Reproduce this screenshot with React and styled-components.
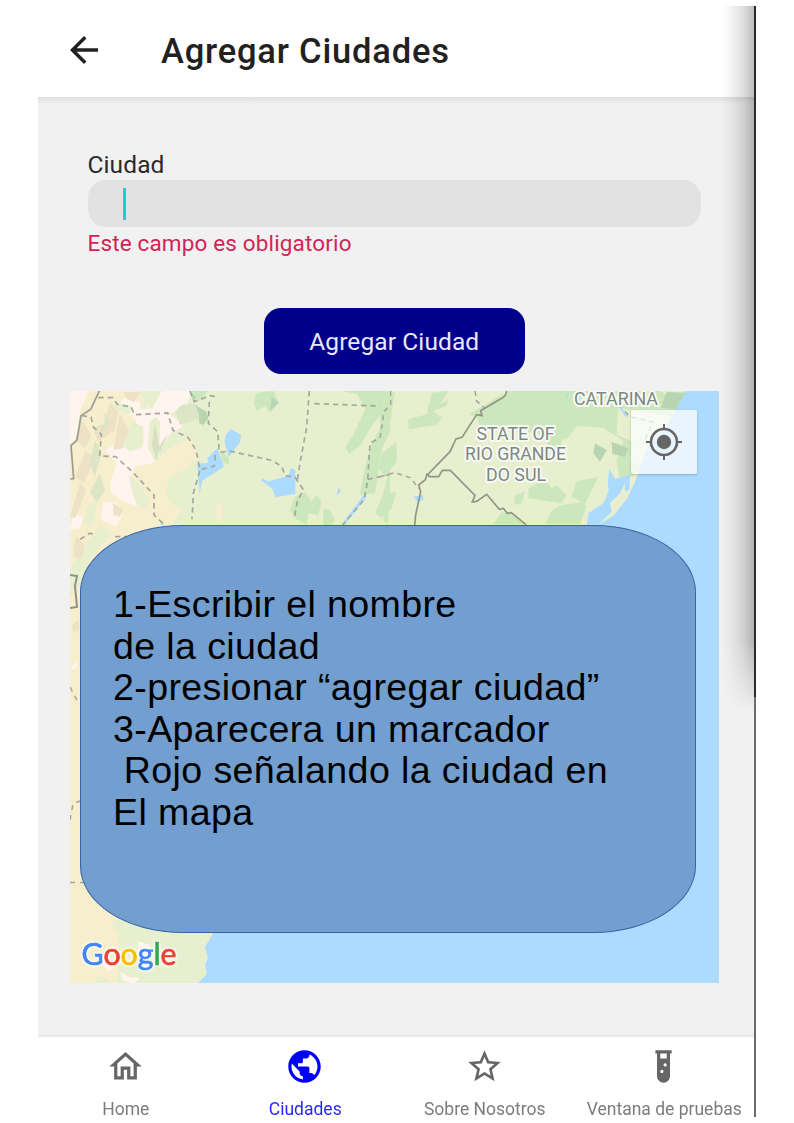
import React from "react";
import styled, { createGlobalStyle } from "styled-components";
import { MdArrowBack, MdOutlineHome, MdPublic, MdStarBorder } from "react-icons/md";

const GlobalStyle = createGlobalStyle`
  * { box-sizing: border-box; }
  body { margin: 0; background: #fff; font-family: Roboto, "Liberation Sans", sans-serif; }
`;

const Page = styled.div`
  width: 794px;
  height: 1123px;
  padding: 6px 0 6px 37.5px;
  overflow: hidden;
`;

const Phone = styled.div`
  position: relative;
  display: flex;
  flex-direction: column;
  width: 717px;
  height: 1111px;
  background: #fff;
`;

const Header = styled.header`
  display: flex;
  align-items: center;
  height: 91px;
  flex: none;
  padding: 0 0 4px 25.5px;
  background: #fff;
  color: #212121;
`;

const BackIcon = styled(MdArrowBack)`
  width: 42px;
  height: 42px;
`;

const Title = styled.h1`
  margin: 2px 0 0 56px;
  font-size: 34.5px;
  font-weight: 500;
  line-height: 40px;
  letter-spacing: 0.8px;
  white-space: nowrap;
`;

const Content = styled.main`
  display: flex;
  flex-direction: column;
  flex: 1;
  padding: 54px 36px 0 32.5px;
  background:
    linear-gradient(to bottom, #dedede, #e4e4e4 2px, #f1f1f1 7px) top / 100% 7px no-repeat,
    linear-gradient(to top, #e6e6e6, #f1f1f1) bottom / 100% 4px no-repeat,
    #f1f1f1;
`;

const Field = styled.div`
  display: flex;
  flex-direction: column;
  margin: 0 17.5px;
`;

const Label = styled.label`
  height: 29px;
  font-size: 24.5px;
  line-height: 28px;
  letter-spacing: 0.1px;
  color: #2a2a2a;
`;

const Input = styled.div`
  display: flex;
  align-items: center;
  height: 47px;
  padding-left: 35px;
  border-radius: 18px;
  background: #e2e2e2;
`;

const Caret = styled.span`
  width: 3px;
  height: 32px;
  background: #00dcc8;
`;

const FieldError = styled.p`
  margin: 1px 0 0;
  font-size: 22.5px;
  line-height: 30px;
  letter-spacing: 0.15px;
  color: #d32456;
`;

const AddButton = styled.button`
  align-self: center;
  width: 261px;
  height: 66px;
  margin: 50px 0 17px;
  padding: 0;
  border: 0;
  border-radius: 17px;
  background: #00008b;
  color: #e8e8fa;
  font: 24.5px Roboto, sans-serif;
  letter-spacing: 0.1px;
`;

const MapArea = styled.div`
  position: relative;
  height: 592px;
  width: 648.5px;
`;

const MapDrawing = styled.svg`
  display: block;
  width: 100%;
  height: 100%;
`;

const LocateButton = styled.div`
  position: absolute;
  top: 19px;
  right: 21.5px;
  display: grid;
  place-items: center;
  width: 66px;
  height: 64px;
  border-radius: 2px;
  background: rgba(255, 255, 255, 0.72);
  box-shadow: 0 1px 3px rgba(0, 0, 0, 0.2);
`;

const Instructions = styled.section`
  position: absolute;
  top: 134px;
  left: 9.5px;
  width: 616.5px;
  height: 408px;
  padding: 58px 0 0 32.5px;
  border: 1.3px solid #3465a4;
  border-radius: 103px / 67px;
  background: #729fcf;
`;

const Step = styled.p`
  margin: 0;
  color: #000;
  font: 37.6px/41.6px "Liberation Sans", Arial, sans-serif;
  letter-spacing: 0.37px;
  white-space: pre;
`;

const TabBar = styled.nav`
  display: flex;
  height: 80px;
  flex: none;
  background: #fff;
`;

const Tab = styled.div`
  display: flex;
  flex: 0 0 179.5px;
  flex-direction: column;
  align-items: center;
  padding: 10px 4px 0 0;
  color: ${(p) => (p.$active ? "#0000ff" : "#666")};

  svg { flex: none; width: 39px; height: 39px; }
`;

const TabLabel = styled.span`
  flex: none;
  margin: 12px 0 0 1px;
  font-size: 17.5px;
  line-height: 22px;
  opacity: 0.85;
  white-space: nowrap;
`;

const EdgeShadow = styled.div`
  position: absolute;
  top: 0;
  right: 0;
  width: 33px;
  height: 706px;
  background: linear-gradient(to right, transparent, rgba(0, 0, 0, 0.04) 25%, rgba(0, 0, 0, 0.12) 62%, rgba(0, 0, 0, 0.27));
  mask-image: linear-gradient(to bottom, #000 90%, transparent);
`;

const Edge = styled.div`
  position: absolute;
  top: ${(p) => p.$top}px;
  right: -1.5px;
  width: 2px;
  height: ${(p) => p.$height}px;
  background: ${(p) => p.$color};
`;

const TestTube = () => (
  <svg viewBox="0 0 24 24" fill="currentColor">
    <path d="M7 2v2h1v14a4 4 0 0 0 8 0V4h1V2H7m4 14a1 1 0 1 1 0-2 1 1 0 0 1 0 2m2-4a1 1 0 1 1 0-2 1 1 0 0 1 0 2m1-5h-4V4h4v3Z" />
  </svg>
);

const LocateIcon = () => (
  <svg width="38" height="38" viewBox="0 0 38 38" fill="none" stroke="#666" strokeWidth="2">
    <circle cx="19" cy="19" r="13" strokeWidth="2.6" />
    <circle cx="19" cy="19" r="7.2" fill="#666" stroke="none" />
    <path d="M19 1v6M19 31v6M1 19h6M31 19h6" />
  </svg>
);

const halo = { paintOrder: "stroke", stroke: "#f8faf2", strokeWidth: 4, strokeLinejoin: "round" };

const Wordmark = styled.text`
  font: 400 31px Lato, sans-serif;
  stroke-width: 0.7px;
  filter: drop-shadow(0 0 1.5px #fff) drop-shadow(0 0 1.5px #fff);
`;

const Terrain = () => (
  <MapDrawing viewBox="70 391 648.5 592" preserveAspectRatio="none">
    <rect x="70" y="391" width="649" height="592" fill="#e7efcf" />
    <path fill="#f7eecd" d="M70 391h78l-8 18 10 16-14 22 28 4 26-13 7 10-8 18-22 14-5 20 20 8-10 18-35 8-20 449H70Z" />
    <g transform="translate(60 380) scale(.33333)">
      <path fill="#fff4ee" d="M30 33h55L60 95 50 175 30 190ZM240 90l50-10 35 20 45 35-60 50-20 60-50 20-15 95-35 5-40-55 20-60-35-40 35-20 50-10 10-60-60-40 20-25 50 10ZM260 80l45-47h88l-10 40-45 25ZM130 365l40 5 18 35-20 35-45-20ZM40 400l30 10-10 35-30 5ZM165 275l50 20 35 50-20 35-45-20-35-25Z" />
      <path fill="#ede2c6" d="M150 65l25 25-10 60-50 35-18-40 35-15ZM180 100l30 60-20 45-30 5ZM65 120l30 45-20 40-30-25ZM75 215l35 15-40 80-25-20ZM60 310l20 20-35 85-15-5ZM190 36h55l-25 30-20-10ZM160 370l30 20-10 20-20-5Z" />
      <path fill="#dce5c6" d="M130 95l20 30-35 45 20-50ZM365 75l40-5 30 40-75 25-15-40ZM105 180l20 40-20 70-15-40ZM120 280l15 50-25 40-20-35Z" />
      <path fill="#f7eecd" d="M380 178l25 15 8 45-85 30-10 80 35 40-50 35-50 10-10-60-30-85 15-30 90-15 12-40Z" />
      <path fill="#e7efcf" d="M245 33h60l-30 55-32-40ZM215 125l35 15v60l-40 15-20-20ZM205 285l25 20 40 55-10 30-30-15-15-45ZM85 375l30-15-20 80-25-10ZM160 65l60 15-15 25-45-20ZM270 125l18-14 12 15-2 75 42-50-5 45-50 50-22-45Z" />
      <path fill="#d9dfc2" d="M285 130l12 70-7 45-14-50ZM325 155l-25 60-8-5Z" />
      <path fill="#f7eecd" d="M470 375h18l-5 48-15-8Z" />
      <path fill="#cde7bd" d="M590 38l50-5 17 35-27 30-15-20-25 15-8-25ZM845 33h145v35l-55 70-35 60-32 24-12-20 25-40 35-75-25-45ZM930 200l25-45 35-60v60l-25 55-20 130-45 5 10-60ZM705 350l30-15 20 30 15-20 15 20-10 40-30-5-5 35-35-20-15-25ZM790 385l20 5 15 30-10 15h-25ZM395 33h50l-30 30-20-10ZM480 210l27 25v20l-20-10ZM990 260v90l-30 60-15-10 25-60ZM970 390l15-10v50l-15-5Z" />
      <path fill="#b8d5b3" d="M405 75l35 20 5 20-15 20-12-5-2-32ZM635 50l22 18-27 24ZM390 36l20 15-12 10Z" />
      <path fill="#addaff" d="M513 147l30 18-2 20-35 47-12-45 3-22ZM472 205l20 55-65 42-8 38-7-89 32-2-2-15ZM605 294l20 10 50-14 12-8 5-18 14 6v72l-60 10-8-24-33-26ZM835 322l8 12-13 13ZM916 338l3 14-65 82-8-2ZM302 427l15 8h-15Z" />
      <path fill="none" stroke="#999b91" strokeWidth="5" d="M118 33 92 88 63 107 51 180 33 197 41 296 31 297" />
      <path fill="none" stroke="#a3a79c" strokeWidth="5" strokeDasharray="16 12" d="M115 53h43l14 20 42 8 9 23 100-5 16 52 45 21 24 38 12 60-20 70-4 78M65 107l28 4 7 30 24 22-5 65 48 2 50 45 65 70v60l27 25M390 33l13 32 47-18 14 2M448 65l-3 65 28 25 5 62 35-3 122 27 30 18 10 28 30 5 25 37-18 35-9 48M748 33l-8 110-18 95-10 62M763 71l220 8M985 80l-13 30-7 60-35 20-7 110-10 58-65 77M923 298l65-14M425 268l38-10 3-35M60 478l28-18 32 4v16M165 470h35" />
    </g>
    <g transform="translate(380 380) scale(.33333)">
      <path fill="#cde7bd" d="M385 33h455l20 10 70-10-30 100-50-10-40 140-90 40-10-60 20-60-60-40-80-5-60 80-60-60-170-15-8-30-25-10ZM0 70l45-37-20 130-25 25ZM5 220l45-35v60L15 290-5 265ZM155 38l50-5-25 40 25-15-5 20-40 15 25 20-15 22-85 13v-30l55-15ZM470 310l30-5 15 20 15-10 30 30-15 25-100-15v-30ZM590 303l65-12-20 40-20 40-40-20ZM545 375l60-8 15 10-20 55H495l20-40ZM405 345l30-10-10 35-23 5ZM0 390l30-50 20-5-15 50-35 30ZM365 395l40 10 30 28h-95Z" />
      <path fill="#b8d5b3" d="M860 35l65 5-12 50-70-7ZM645 190l35 20-20 35-20-25ZM695 185l50 20-10 25-38-8Z" />
      <path fill="#e7efcf" d="M545 180l25-8 30 28-20 18-38-8ZM715 85l195 30-30 45-70 60-20 45-40-25 10-55-50-20ZM735 310l30-30 20-10-20 60-40 50-20 10Z" />
      <path fill="#addaff" d="M920 33h98v455H750l-95-54 45-27 40-50 25-50 22-65 25-60 48-42 20-40ZM688 267l17 30 45-12-2 45-13 5v-25l-15 30-30 30 5 25-40 39h-35l6-35 45-30 15-38-3-25ZM557 40l8 0v18ZM100 350l30-5v15l-18 5ZM518 145l10 5-3 15Z" />
      <path fill="none" stroke="#929488" strokeWidth="5" d="M380 33c-2 14-7 18-20 25l-58 34 4 15-16-3-44 68-18 5-18 38-70 72-4 12-20 16 6 20-15 70-3 32M138 281l11 9h27l11-19h24l74 75-8 20 13-2 30-21 38 45 12-3 12 15 12-2 44 36" />
      <path fill="none" stroke="#a3a79c" strokeWidth="4.5" strokeDasharray="15 12" d="M285 33l5 30 22 20M32 33v40L12 95 0 175M0 290l45-12 48 16 22 32M715 75l35 35 70 17-32 65" />
      <path fill="none" stroke="#addaff" strokeWidth="6" d="M715 75l25 35" />
    </g>
    <path fill="#addaff" d="M214 932h505v51H198l9-9-2-9 3-7-3-11Z" />
    <path fill="#addaff" d="M620 525h99v410H500Z" />
    <path fill="#e7efcf" d="M100 525l12 8-22 26-10 26-10 12v-28l16-24ZM111 921l14-2 11 5-19 8ZM199 960l3 6-8 8-2-4ZM96 983v-7l10 3 5 4ZM180 983l5-3 4 3Z" />
    <path fill="#ede2c6" d="M76 536l9 10-4 14-8-4ZM72 625l7-5v10l-6 3Z" />
    <path fill="#fff4ee" d="M73 665l4-4v6l-6 4ZM120 972l10 5 10 1-6 6-11-4ZM138 941l12 4v15l-12-6ZM101 963l10-3 4 8-7 3Z" />
    <path fill="none" stroke="#8f9287" strokeWidth="2" d="M70 575l7 1-2 10 2 21-7 1" />
    <path fill="none" stroke="#a3a79c" strokeWidth="1.5" strokeDasharray="5 5" d="M70 882.500h17M70 687l9 17M70 820l3-16 7-3" />
    <g fontFamily="Roboto, sans-serif" fontSize="18.500" fill="#7c8884" style={halo}>
      <text x="574" y="405.400" fontSize="17.500" textLength="84" lengthAdjust="spacingAndGlyphs">CATARINA</text>
      <text x="476.500" y="440" textLength="78" lengthAdjust="spacingAndGlyphs">STATE OF</text>
      <text x="465" y="460" textLength="101" lengthAdjust="spacingAndGlyphs">RIO GRANDE</text>
      <text x="486" y="481" textLength="60" lengthAdjust="spacingAndGlyphs">DO SUL</text>
    </g>
    <Wordmark x="81.500" y="964.500" textLength="95" lengthAdjust="spacingAndGlyphs">
      <tspan fill="#4285f4" stroke="#4285f4">G</tspan><tspan fill="#ea4335" stroke="#ea4335">o</tspan><tspan fill="#fbbc05" stroke="#fbbc05">o</tspan><tspan fill="#4285f4" stroke="#4285f4">g</tspan><tspan fill="#34a853" stroke="#34a853">l</tspan><tspan fill="#ea4335" stroke="#ea4335">e</tspan>
    </Wordmark>
  </MapDrawing>
);

const steps = [
  "1-Escribir el nombre",
  "de la ciudad",
  "2-presionar “agregar ciudad”",
  "3-Aparecera un marcador",
  " Rojo señalando la ciudad en",
  "El mapa",
];

const tabs = [
  { label: "Home", Icon: MdOutlineHome },
  { label: "Ciudades", Icon: MdPublic, active: true },
  { label: "Sobre Nosotros", Icon: MdStarBorder },
  { label: "Ventana de pruebas", Icon: TestTube },
];

export default function App() {
  return (
    <Page>
      <GlobalStyle />
      <Phone>
        <Header>
          <BackIcon />
          <Title>Agregar Ciudades</Title>
        </Header>
        <Content>
          <Field>
            <Label>Ciudad</Label>
            <Input><Caret /></Input>
            <FieldError>Este campo es obligatorio</FieldError>
          </Field>
          <AddButton>Agregar Ciudad</AddButton>
          <MapArea>
            <Terrain />
            <LocateButton><LocateIcon /></LocateButton>
            <Instructions>
              {steps.map((text) => <Step key={text}>{text}</Step>)}
            </Instructions>
          </MapArea>
        </Content>
        <TabBar>
          {tabs.map(({ label, Icon, active }) => (
            <Tab key={label} $active={active}>
              <Icon />
              <TabLabel>{label}</TabLabel>
            </Tab>
          ))}
        </TabBar>
        <EdgeShadow />
        <Edge $top={0} $height={691} $color="#2b2b2b" />
        <Edge $top={691} $height={420} $color="#6f6b68" />
      </Phone>
    </Page>
  );
}
